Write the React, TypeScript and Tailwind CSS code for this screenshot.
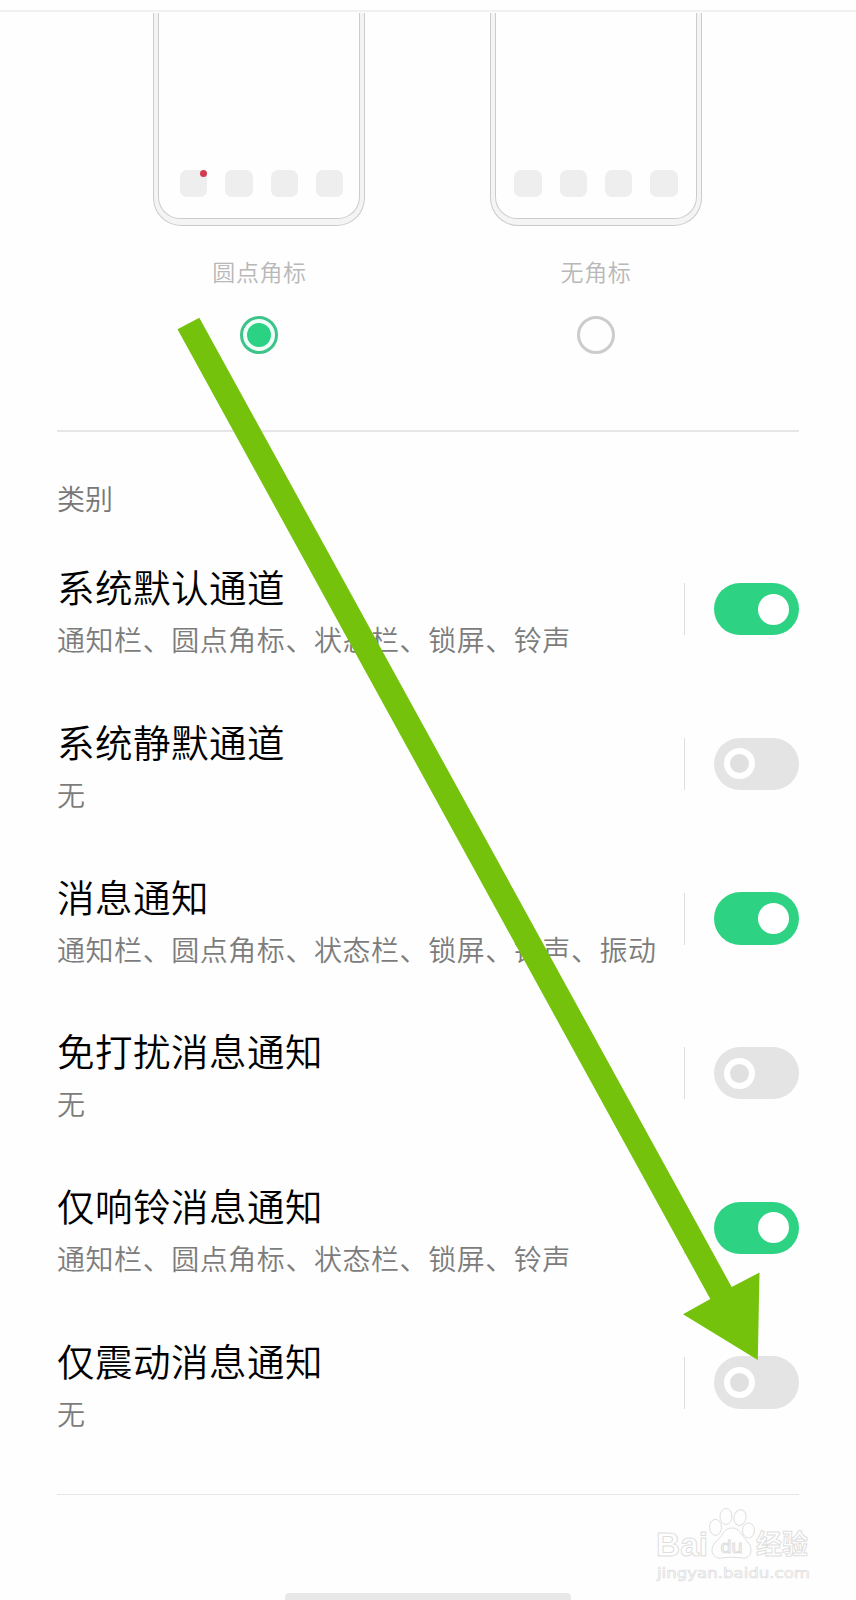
type Channel = { title: string; detail: string; on: boolean };

const channels: Channel[] = [
  { title: '系统默认通道', detail: '通知栏、圆点角标、状态栏、锁屏、铃声', on: true },
  { title: '系统静默通道', detail: '无', on: false },
  { title: '消息通知', detail: '通知栏、圆点角标、状态栏、锁屏、铃声、振动', on: true },
  { title: '免打扰消息通知', detail: '无', on: false },
  { title: '仅响铃消息通知', detail: '通知栏、圆点角标、状态栏、锁屏、铃声', on: true },
  { title: '仅震动消息通知', detail: '无', on: false },
];

function PhonePreview({ dot }: { dot: boolean }) {
  return (
    <div className="h-[213px] w-[212px] rounded-b-[28px] border-[1.5px] border-t-0 border-[#cccccc] bg-[#f4f4f4] px-[4px] pb-[6px]">
      <div
        className={`flex h-full items-end justify-center gap-[18px] rounded-b-[22px] border border-t-0 border-[#cccccc] bg-[#fefefe] pb-[21px] ${dot ? 'pl-[5px]' : 'pl-[1px]'}`}
      >
        {[0, 1, 2, 3].map((i) => (
          <div key={i} className="relative h-[27.3px] w-[27.3px] rounded-[7px] bg-[#eeeeee]">
            {dot && i === 0 && (
              <div className="absolute right-0 top-0 h-[7px] w-[7px] rounded-full bg-[#d33b52]" />
            )}
          </div>
        ))}
      </div>
    </div>
  );
}

function BadgeOption({ label, selected }: { label: string; selected: boolean }) {
  return (
    <div className="flex w-[212px] flex-col items-center">
      <PhonePreview dot={selected} />
      <div className="mt-[26.5px] h-9 pl-[1px] text-[23px] leading-9 tracking-[0.6px] text-[#b8b8b8]">{label}</div>
      {selected ? (
        <div className="mt-[27px] flex h-[38px] w-[38px] items-center justify-center rounded-full border-[3px] border-[#3fc38b] bg-[#f0fff8]">
          <div className="h-6 w-6 rounded-full bg-[#2bd284]" />
        </div>
      ) : (
        <div className="mt-[27px] h-[38px] w-[38px] rounded-full border-[3px] border-[#cccccc]" />
      )}
    </div>
  );
}

function Toggle({ on }: { on: boolean }) {
  return on ? (
    <div className="flex h-[52.5px] w-[85.5px] items-center justify-end rounded-full bg-[#2dd283] pr-[10.5px]">
      <div className="h-[31px] w-[31px] rounded-full bg-white" />
    </div>
  ) : (
    <div className="flex h-[52.5px] w-[85.5px] items-center rounded-full bg-[#e4e4e4] pl-[10.5px]">
      <div className="h-[31px] w-[31px] rounded-full border-[6.5px] border-white bg-[#e0e0e0]" />
    </div>
  );
}

function ChannelRow({ channel }: { channel: Channel }) {
  return (
    <div className="flex h-[154.7px] items-center">
      <div className="flex-1 whitespace-nowrap pt-px">
        <div className="h-[54px] text-[37.5px] leading-[54px] tracking-[0.5px] text-black">{channel.title}</div>
        <div className="mt-[5px] h-[42px] text-[28px] leading-[42px] tracking-[0.55px] text-[#7c7c7c]">
          {channel.detail}
        </div>
      </div>
      <div className="mr-[28.5px] h-[52px] w-px bg-[#dedede]" />
      <Toggle on={channel.on} />
    </div>
  );
}

function Watermark() {
  return (
    <svg className="absolute left-[652px] top-[1504px]" width="170" height="84" fill="#fefefe" stroke="#dedede">
      <g strokeWidth="1">
        <ellipse cx="63.5" cy="23.3" rx="6" ry="8" />
        <ellipse cx="74" cy="12.5" rx="6" ry="8" />
        <ellipse cx="88" cy="13.5" rx="6" ry="8" transform="rotate(12 88 13.5)" />
        <ellipse cx="96.5" cy="26.5" rx="6" ry="7.5" />
        <path d="M80 24c-5 0-8 3-10 7-3 5-10 8-10 15 0 6 5 9 10 8 7-1 13-1 20 0 5 1 9-2 9-8 0-7-6-10-9-15-2-4-5-7-10-7z" />
      </g>
      <g fontFamily="'Liberation Sans','Noto Sans CJK SC',sans-serif" fontWeight="700" strokeWidth="1">
        <text x="4" y="51.5" fontSize="33" textLength="52" lengthAdjust="spacingAndGlyphs">Bai</text>
        <text x="68.5" y="49" fontSize="18" fontWeight="400" textLength="22" lengthAdjust="spacingAndGlyphs">du</text>
        <text x="104" y="50" fontSize="27" textLength="52" lengthAdjust="spacingAndGlyphs">经验</text>
      </g>
      <text x="5" y="73.5" fontFamily="'DejaVu Sans',sans-serif" fontSize="14.5" fontWeight="400" strokeWidth="0.7" textLength="153" lengthAdjust="spacingAndGlyphs">
        jingyan.baidu.com
      </text>
    </svg>
  );
}

export default function App() {
  return (
    <div className="relative flex h-[1600px] w-[856px] flex-col overflow-hidden bg-[#fefefe] font-['Noto_Sans_CJK_SC',sans-serif] font-[350]">
      <div className="mt-[10px] h-[2px] bg-[#f1f1f1]" />
      <div className="flex h-[418px] gap-[124.5px] pl-[153px] pt-px">
        <BadgeOption label="圆点角标" selected />
        <BadgeOption label="无角标" selected={false} />
      </div>
      <div className="mx-[57px] h-[1.5px] bg-[#e6e6e6]" />
      <div className="ml-[57px] mt-[46.5px] h-10 text-[28px] leading-10 text-[#777777]">类别</div>
      <div className="ml-[57px] mr-[57px] mt-[13.8px]">
        {channels.map((c) => (
          <ChannelRow key={c.title} channel={c} />
        ))}
      </div>
      <div className="mx-[57px] mt-[34px] h-[1.5px] bg-[#e6e6e6]" />
      <div className="mx-auto mt-auto h-[7px] w-[286px] rounded-t-[4px] bg-[#e8e8e8]" />
      <Watermark />
      <svg className="pointer-events-none absolute left-0 top-0" width="856" height="1600">
        <path
          d="M177.5 329.3L199.3 317.7L731.7 1287L759.5 1272.5L757.8 1360L683 1314.3L710.3 1299Z"
          fill="#75c20d"
        />
      </svg>
    </div>
  );
}
